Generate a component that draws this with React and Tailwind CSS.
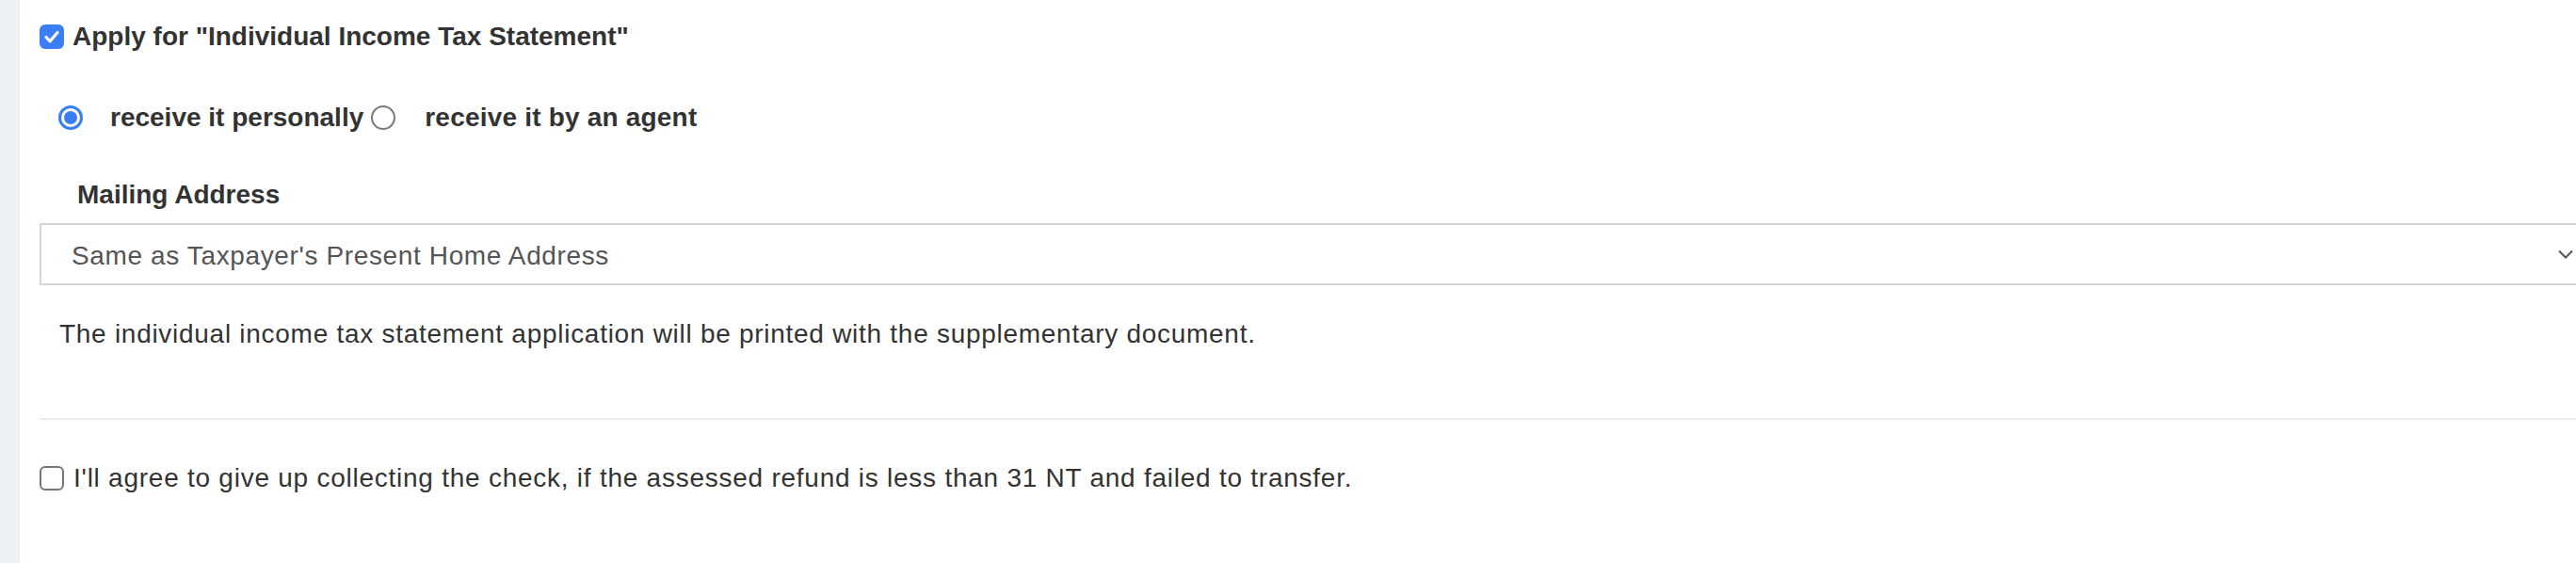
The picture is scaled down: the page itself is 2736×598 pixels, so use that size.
import React from "react";

function CheckedBox() {
  return (
    <span className="flex h-[26px] w-[26px] shrink-0 items-center justify-center rounded-[6px] bg-[#3a7ef6]">
      <svg width="20" height="20" viewBox="0 0 20 20" fill="none">
        <path d="M4 10.5 L8.2 14.8 L16 5.5" stroke="#ffffff" strokeWidth="3.2" strokeLinecap="round" strokeLinejoin="round" />
      </svg>
    </span>
  );
}

function EmptyBox() {
  return <span className="block h-[26px] w-[26px] shrink-0 rounded-[6px] border-2 border-[#767676] bg-white" />;
}

function RadioOn() {
  return (
    <span className="flex h-[26px] w-[26px] shrink-0 items-center justify-center rounded-full border-[3px] border-[#3a7ef6] bg-white">
      <span className="block h-[14px] w-[14px] rounded-full bg-[#3a7ef6]" />
    </span>
  );
}

function RadioOff() {
  return <span className="block h-[26px] w-[26px] shrink-0 rounded-full border-2 border-[#7a7a7a] bg-white" />;
}

export default function App() {
  return (
    <div
      className="flex min-h-[598px] w-full overflow-hidden bg-white text-[#333333]"
      style={{ fontFamily: '"Liberation Sans", Arial, sans-serif' }}
    >
      <div className="w-[21px] shrink-0 bg-[#edf0f5]" />
      <div className="min-w-0 flex-1 pl-[21px]">
        <div className="flex h-[78px] items-center gap-[9px]">
          <CheckedBox />
          <span className="text-[28px] font-bold leading-none">Apply for "Individual Income Tax Statement"</span>
        </div>

        <div className="flex h-[94px] items-center pl-[20px]">
          <RadioOn />
          <span className="ml-[29px] text-[28px] font-bold leading-none">receive it personally</span>
          <span className="ml-[8px]">
            <RadioOff />
          </span>
          <span className="ml-[31px] text-[28px] font-bold leading-none tracking-[0.2px]">receive it by an agent</span>
        </div>

        <div className="flex h-[65px] items-center pl-[40px] pt-[5px]">
          <span className="text-[28px] font-bold leading-none">Mailing Address</span>
        </div>

        <div className="-mr-[12px] flex h-[66px] items-center justify-between border-2 border-[#d3d6dc] pl-[32px] pr-[13px]">
          <span className="mt-[4px] text-[28px] leading-none tracking-[0.63px] text-[#555555]">Same as Taxpayer's Present Home Address</span>
          <svg width="16" height="10" viewBox="0 0 16 10" fill="none">
            <path d="M1 1.5 L8 8.5 L15 1.5" stroke="#555555" strokeWidth="2" />
          </svg>
        </div>

        <div className="flex h-[102px] items-center pl-[21px] pt-[2px]">
          <span className="text-[28px] leading-none tracking-[0.72px]">
            The individual income tax statement application will be printed with the supplementary document.
          </span>
        </div>

        <div className="mt-[39px] h-[2px] bg-[#ebebeb]" />

        <div className="flex h-[122px] items-center gap-[10px] pt-[2px]">
          <EmptyBox />
          <span className="text-[28px] leading-none tracking-[0.75px]">
            I'll agree to give up collecting the check, if the assessed refund is less than 31 NT and failed to transfer.
          </span>
        </div>
      </div>
    </div>
  );
}
